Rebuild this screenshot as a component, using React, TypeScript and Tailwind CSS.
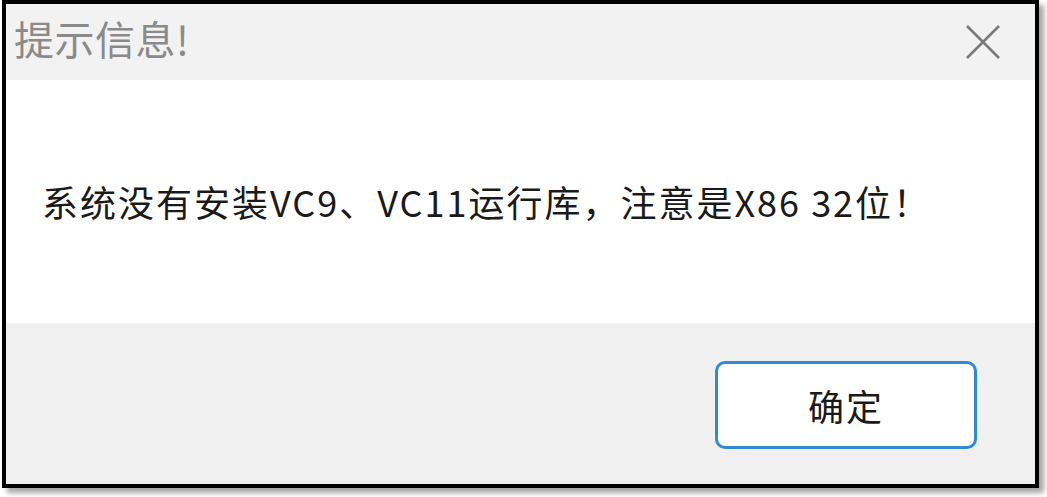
// Windows-style message box: title bar, message, single OK button.
const cjk = { fontFamily: '"Microsoft YaHei", "Noto Sans CJK SC", "Noto Sans", sans-serif' };

function CloseIcon() {
  return (
    <svg className="w-[36px] h-[36px]" viewBox="0 0 36 36" fill="none" stroke="#7a7a7a" strokeWidth={2.6}>
      <path d="M2 2L34 34M34 2L2 34" />
    </svg>
  );
}

export default function App() {
  return (
    <div className="w-[1047px] h-[497px] bg-white" style={cjk}>
      <div className="ml-[2px] w-[1037px] h-[488px] border-4 border-black flex flex-col shadow-[5px_5px_5px_rgba(0,0,0,0.35)]">
        <div className="h-[76px] shrink-0 bg-[#f2f2f2] flex items-center justify-between pl-[8px] pr-[34px]">
          <span className="text-[40px] leading-none text-[#8a8a8a] -mt-[9px] tracking-[0.5px]">提示信息!</span>
          <CloseIcon />
        </div>
        <div className="h-[243px] shrink-0 bg-white flex items-center pl-[36px]">
          <span className="text-[36px] leading-none text-[#1a1a1a] tracking-[2px] -mt-[2px]">
            系统没有安装VC9、VC11运行库，注意是X86 32位！
          </span>
        </div>
        <div className="flex-1 bg-[#f0f0f0] flex justify-end items-start pt-[38px] pr-[58px]">
          <button className="w-[262px] h-[88px] rounded-[10px] border-[3px] border-[#2f8ad8] bg-white text-[36px] leading-none text-[#1a1a1a] tracking-[2px]">
            确定
          </button>
        </div>
      </div>
    </div>
  );
}
